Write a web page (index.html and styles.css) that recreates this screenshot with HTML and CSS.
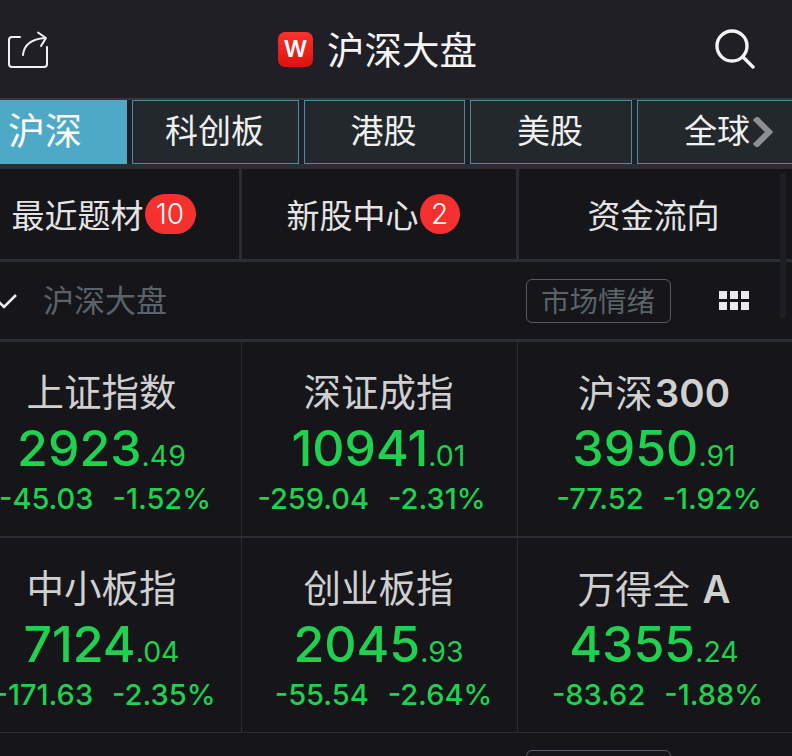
FILE: index.html
```html
<!DOCTYPE html>
<html lang="en">
<head>
    <meta charset="UTF-8">
    <meta name="viewport" content="width=device-width, initial-scale=1.0">
    <title>沪深大盘</title>
    <link rel="stylesheet" href="styles.css">
</head>
<body>
    <div class="page">
        <header class="top-bar">
            <svg class="share-icon" viewBox="0 0 40 37" width="40" height="37" fill="none" stroke="#f2f2f2" stroke-width="2" stroke-linecap="round" stroke-linejoin="round">
                <path d="M12 6H4a3 3 0 0 0-3 3v24a3 3 0 0 0 3 3h32a3 3 0 0 0 3-3V16"/>
                <path d="M15 24C16 14 24 8 37 7"/>
                <path d="M30 1.5L38 7L33 15"/>
            </svg>
            <div class="top-title">
                <span class="logo">W</span>
                <span class="top-text">沪深大盘</span>
            </div>
            <svg class="search-icon" viewBox="0 0 40 40" width="40" height="40" fill="none" stroke="#f5f5f5" stroke-width="3.4" stroke-linecap="round">
                <circle cx="17" cy="17" r="15"/>
                <path d="M28 28l10 10"/>
            </svg>
        </header>

        <nav class="tabs">
            <div class="tab active">沪深</div>
            <div class="tab">科创板</div>
            <div class="tab">港股</div>
            <div class="tab">美股</div>
            <div class="tab">全球</div>
            <svg class="more-arrow" viewBox="0 0 21 30" width="21" height="30" fill="none" stroke="#8d8f91" stroke-width="6">
                <path d="M3 1l14 14L3 29"/>
            </svg>
        </nav>

        <div class="shortcuts">
            <div class="shortcut first">最近题材<span class="badge wide">10</span></div>
            <div class="shortcut second">新股中心<span class="badge">2</span></div>
            <div class="shortcut third">资金流向</div>
        </div>

        <div class="section-head">
            <svg class="check" viewBox="0 0 20 16" width="20" height="16" fill="none" stroke="#eee" stroke-width="2.6">
                <path d="M1 9l5 5L18 2"/>
            </svg>
            <span class="section-name">沪深大盘</span>
            <span class="mood">市场情绪</span>
            <div class="dots">
                <i></i><i></i><i></i><i></i><i></i><i></i>
            </div>
        </div>

        <div class="cards">
            <div class="card">
                <div class="card-name">上证指数</div>
                <div class="card-price">2923<small>.49</small></div>
                <div class="card-change right-3"><span>-45.03</span><span>-1.52%</span></div>
            </div>
            <div class="card">
                <div class="card-name">深证成指</div>
                <div class="card-price">10941<small>.01</small></div>
                <div class="card-change left-7"><span>-259.04</span><span>-2.31%</span></div>
            </div>
            <div class="card">
                <div class="card-name">沪深<b>300</b></div>
                <div class="card-price">3950<small>.91</small></div>
                <div class="card-change right-5"><span>-77.52</span><span>-1.92%</span></div>
            </div>
            <div class="card">
                <div class="card-name">中小板指</div>
                <div class="card-price">7124<small>.04</small></div>
                <div class="card-change right-3"><span>-171.63</span><span>-2.35%</span></div>
            </div>
            <div class="card">
                <div class="card-name">创业板指</div>
                <div class="card-price">2045<small>.93</small></div>
                <div class="card-change right-5"><span>-55.54</span><span>-2.64%</span></div>
            </div>
            <div class="card">
                <div class="card-name">万得全 <b>A</b></div>
                <div class="card-price">4355<small>.24</small></div>
                <div class="card-change right-3"><span>-83.62</span><span>-1.88%</span></div>
            </div>
        </div>

        <div class="next-head"><div class="next-box"></div></div>

        <div class="scrollbar"></div>
    </div>
</body>
</html>
```

FILE: styles.css
```css
html, body {
    margin: 0;
    padding: 0;
    background-color: #15151a;
}
.page {
    position: relative;
    width: 792px;
    height: 756px;
    overflow: hidden;
    background-color: #15151a;
    font-family: "Inter", "Noto Sans CJK SC", sans-serif;
    color: #e8e8e8;
}

/* top bar */
.top-bar {
    height: 98px;
    display: flex;
    align-items: center;
    justify-content: center;
    position: relative;
    background-color: #1f1f25;
    border-bottom: 2px solid #36373c;
}
.share-icon {
    position: absolute;
    left: 8px;
    top: 31px;
}
.search-icon {
    position: absolute;
    left: 715px;
    top: 29px;
}
.top-title {
    display: flex;
    align-items: center;
    gap: 14px;
    font-size: 37.5px;
    color: #f4f4f4;
    margin-left: -37px;
}
.top-text {
    margin-bottom: 4px;
}
.logo {
    width: 35px;
    height: 35px;
    border-radius: 7px;
    background: linear-gradient(#f8322c, #dd120e);
    color: #fff;
    font-size: 23px;
    font-weight: 600;
    line-height: 35px;
    text-align: center;
}

/* market tabs */
.tabs {
    position: relative;
    height: 64px;
    margin-left: -37px;
    display: grid;
    grid-template-columns: 164px 167px 161px 162px 162px;
    column-gap: 5px;
    background-color: #1f1f25;
}
.tab {
    display: flex;
    align-items: center;
    justify-content: center;
    box-sizing: border-box;
    padding: 0 2px 7px 0;
    background-color: #23282d;
    border: 1px solid #4d8b9f;
    font-size: 33px;
    color: #f0f0f0;
}
.tab.active {
    padding: 0 0 7px;
    background-color: #4ea9c6;
    border-color: #4ea9c6;
    font-size: 37px;
    color: #fff;
}
.more-arrow {
    position: absolute;
    left: 789px;
    top: 17px;
}

/* shortcuts */
.shortcuts {
    margin-left: -36px;
    display: grid;
    grid-template-columns: 275px 274px 275px;
    column-gap: 3px;
    padding: 5px 0 3px;
    background-color: #2a2e33;
}
.shortcut {
    height: 90px;
    box-sizing: border-box;
    display: flex;
    align-items: center;
    justify-content: center;
    padding-bottom: 1px;
    background-color: #15151a;
    font-size: 33px;
    color: #e4e4e4;
}
.shortcut.first {
    padding-left: 4px;
}
.shortcut.second {
    padding-right: 12px;
}
.shortcut.third {
    padding-right: 6px;
}
.badge {
    width: 40px;
    height: 40px;
    border-radius: 20px;
    margin-left: 1px;
    background-color: #f5312f;
    color: #fff;
    font-size: 28px;
    font-weight: 300;
    line-height: 40px;
    text-align: center;
}
.badge.wide {
    width: 51px;
}

/* section heading */
.section-head {
    height: 77px;
    display: flex;
    align-items: center;
    position: relative;
    padding-left: 43px;
}
.check {
    position: absolute;
    left: -2px;
    top: 31px;
}
.section-name {
    font-size: 31px;
    line-height: 44px;
    color: #5a626a;
}
.mood {
    box-sizing: border-box;
    height: 44px;
    margin-left: 359px;
    padding: 0 15px 0 14px;
    border: 1px solid #565b62;
    border-radius: 6px;
    font-size: 28.5px;
    line-height: 43px;
    color: #5a626a;
}
.dots {
    display: grid;
    grid-template-columns: repeat(3, 8px);
    grid-auto-rows: 8px;
    gap: 3px;
    margin-left: 48px;
}
.dots i {
    background-color: #eaeaea;
}

/* index cards */
.cards {
    margin-left: -36px;
    display: grid;
    grid-template-columns: 277px 275px 274px;
    gap: 2px 1px;
    padding: 3px 0 1px;
    background-color: #2a2e33;
}
.card {
    height: 194px;
    box-sizing: border-box;
    padding-right: 2px;
    display: flex;
    flex-direction: column;
    align-items: center;
    background-color: #15151a;
}
.card-name {
    margin-top: 25px;
    height: 52px;
    font-size: 37.5px;
    line-height: 52px;
    color: #d0d0d0;
}
.card-name b {
    margin-left: 2px;
    font-weight: 600;
    font-size: 38.5px;
}
.card-price {
    height: 56px;
    margin-top: 1px;
    font-size: 50px;
    font-weight: 550;
    line-height: 56px;
    color: #1fd14f;
}
.card-price small {
    font-size: 28.5px;
    font-weight: 400;
}
.card-change {
    display: flex;
    gap: 19px;
    margin-top: 5px;
    font-size: 29px;
    font-weight: 500;
    line-height: 36px;
    color: #1fd14f;
}
.card-change.left-7 {
    margin-right: 14px;
}
.card-change.right-5 {
    margin-left: 10px;
}
.card-change.right-3 {
    margin-left: 7px;
}

.next-head {
    height: 60px;
    padding: 17px 0 0 526px;
}
.next-box {
    box-sizing: border-box;
    width: 145px;
    height: 44px;
    border: 1px solid #565b62;
    border-radius: 6px;
}

.scrollbar {
    position: absolute;
    left: 780px;
    top: 173px;
    width: 6px;
    height: 146px;
    border-radius: 3px;
    background-color: #1e1f24;
}
```
